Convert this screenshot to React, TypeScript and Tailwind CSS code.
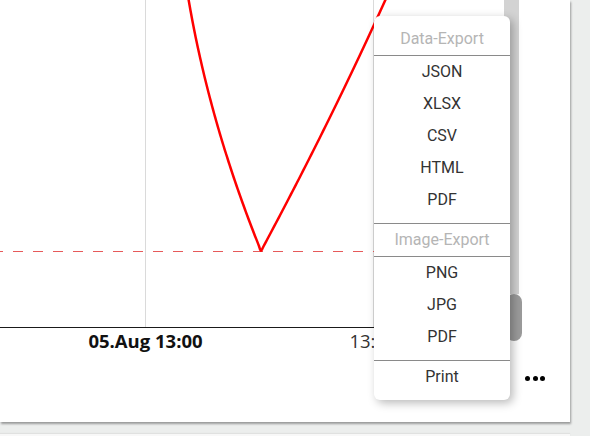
import React from "react";

function buildPts(): [number, number][] {
  const left: [number, number][] = [];
  const right: [number, number][] = [];
  for (let t = 265; t >= 12; t -= 8) {
    left.push([261 - (0.405 * t - 0.000465 * t * t), 251 - t]);
  }
  left.push([258.8, 245.5]);
  left.push([260, 249.3]);
  const mid: [number, number][] = [[261, 250.8]];
  right.push([262.1, 249.3]);
  right.push([263.7, 246]);
  for (let t = 12; t <= 275; t += 8) {
    right.push([261 + (0.5381 * t - 0.00017 * t * t), 251 - t]);
  }
  return [...left, ...mid, ...right];
}

const pts = buildPts();

function catmull(p: [number, number][]) {
  let d = `M${p[0][0].toFixed(2)},${p[0][1].toFixed(2)}`;
  for (let i = 0; i < p.length - 1; i++) {
    const p0 = p[i - 1] || p[i];
    const p1 = p[i];
    const p2 = p[i + 1];
    const p3 = p[i + 2] || p2;
    const c1x = p1[0] + (p2[0] - p0[0]) / 6;
    const c1y = p1[1] + (p2[1] - p0[1]) / 6;
    const c2x = p2[0] - (p3[0] - p1[0]) / 6;
    const c2y = p2[1] - (p3[1] - p1[1]) / 6;
    d += ` C${c1x.toFixed(2)},${c1y.toFixed(2)} ${c2x.toFixed(2)},${c2y.toFixed(2)} ${p2[0].toFixed(2)},${p2[1].toFixed(2)}`;
  }
  return d;
}

function Chart() {
  return (
    <svg width={504} height={422} className="block shrink-0">
      <line x1={145.5} y1={0} x2={145.5} y2={327} stroke="#dadada" strokeWidth={1} />
      <line x1={373.5} y1={0} x2={373.5} y2={327} stroke="#dadada" strokeWidth={1} />
      <line
        x1={-7}
        y1={251.5}
        x2={490}
        y2={251.5}
        stroke="#e65a5a"
        strokeWidth={1}
        strokeDasharray="10 10"
      />
      <path
        d={catmull(pts)}
        fill="none"
        stroke="#ff0000"
        strokeWidth={2.5}
        strokeLinejoin="round"
        strokeLinecap="round"
      />
      <line x1={0} y1={327.5} x2={490} y2={327.5} stroke="#1a1a1a" strokeWidth={1} />
      <text
        x={145.5}
        y={348}
        textAnchor="middle"
        fontFamily="'Open Sans', sans-serif"
        fontSize={18.5}
        fontWeight={700}
        fill="#111"
      >
        05.Aug 13:00
      </text>
      <text
        x={373}
        y={348}
        textAnchor="middle"
        fontFamily="'Open Sans', sans-serif"
        fontSize={18.5}
        fill="#333"
      >
        13:00
      </text>
    </svg>
  );
}

function Item({ label }: { label: string }) {
  return (
    <div className="h-8 flex items-center justify-center text-[#333]">{label}</div>
  );
}

function Header({ label }: { label: string }) {
  return (
    <div className="h-8 flex items-center justify-center text-[#b5b5b5]">{label}</div>
  );
}

function Sep({ gap }: { gap?: boolean }) {
  return <div className={`h-px bg-[#8a8a8a] ${gap ? "mt-[7px]" : ""}`} />;
}

export default function App() {
  return (
    <div className="h-[436px] w-[590px] overflow-hidden bg-[#eceeed] font-['Roboto',sans-serif]">
      <div className="relative flex h-[422px] w-[570px] bg-white shadow-[1px_2px_2px_rgba(0,0,0,0.35)]">
        <Chart />
        <div className="flex w-[18px] shrink-0 flex-col">
          <div className="h-[294px] w-[15px] bg-[#d3d3d3]" />
          <div className="ml-[2px] h-[47px] w-[16px] rounded-full bg-[#9b9b9b]" />
        </div>

        <div className="absolute left-[521px] top-[364px] flex h-[28px] w-[28px] items-center justify-center gap-[2.5px]">
          <span className="h-[5px] w-[5px] rounded-full bg-black" />
          <span className="h-[5px] w-[5px] rounded-full bg-black" />
          <span className="h-[5px] w-[5px] rounded-full bg-black" />
        </div>

        <div className="absolute left-[374px] top-[16px] w-[136px] rounded-[6px] bg-white py-[7px] text-[16px] leading-none shadow-[3px_3px_10px_rgba(0,0,0,0.28)]">
          <Header label="Data-Export" />
          <Sep />
          <Item label="JSON" />
          <Item label="XLSX" />
          <Item label="CSV" />
          <Item label="HTML" />
          <Item label="PDF" />
          <Sep gap />
          <Header label="Image-Export" />
          <Sep />
          <Item label="PNG" />
          <Item label="JPG" />
          <Item label="PDF" />
          <Sep gap />
          <Item label="Print" />
        </div>
      </div>
      <div className="mt-[12px] h-[40px] w-[570px] bg-[#f8f8f8] shadow-[0_-1px_1px_rgba(0,0,0,0.05)]" />
    </div>
  );
}
